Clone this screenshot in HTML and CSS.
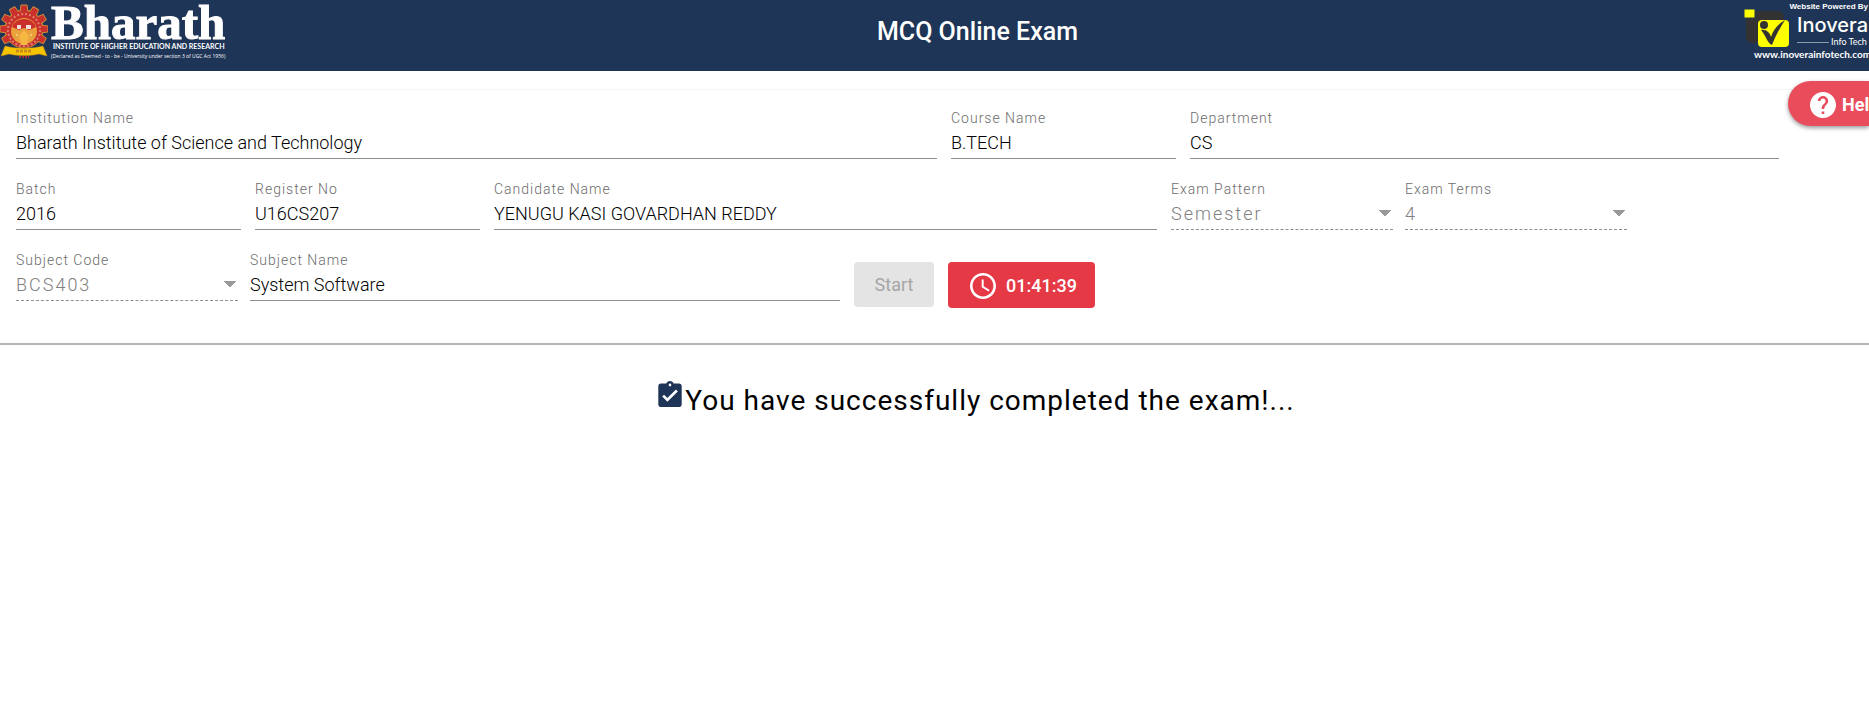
FILE: index.html
```html
<!DOCTYPE html>
<html lang="en">
<head>
<meta charset="utf-8">
<title>MCQ Online Exam</title>
<link rel="stylesheet" href="styles.css">
</head>
<body>
<header class="topbar">
  <div class="brand">
    <svg class="emblem" viewBox="0 0 48 54" aria-hidden="true">
      <g fill="#c9302c" stroke="#c98a3a" stroke-width="1">
        <circle cx="24" cy="25" r="19"/>
        <path d="M20 8l1-7h6l1 7z"/>
        <path d="M20 8l1-7h6l1 7z" transform="rotate(30 24 25)"/>
        <path d="M20 8l1-7h6l1 7z" transform="rotate(60 24 25)"/>
        <path d="M20 8l1-7h6l1 7z" transform="rotate(90 24 25)"/>
        <path d="M20 8l1-7h6l1 7z" transform="rotate(120 24 25)"/>
        <path d="M20 8l1-7h6l1 7z" transform="rotate(240 24 25)"/>
        <path d="M20 8l1-7h6l1 7z" transform="rotate(270 24 25)"/>
        <path d="M20 8l1-7h6l1 7z" transform="rotate(300 24 25)"/>
        <path d="M20 8l1-7h6l1 7z" transform="rotate(330 24 25)"/>
      </g>
      <circle cx="24" cy="25" r="18" fill="#c9302c"/>
      <circle cx="24" cy="26" r="16" fill="none" stroke="#dd7f6a" stroke-width="2" stroke-dasharray="2 2"/>
      <circle cx="24" cy="27" r="13" fill="#e9a23b"/>
      <path d="M12 23a13 13 0 0 1 24 0l-7 3-5-2-5 2z" fill="#c9302c"/>
      <path d="M17 21h4v4h-4zM26 21h5v4h-5z" fill="#f3dfd8"/>
      <path d="M24 26l5 6-2 9h-6l-2-9z" fill="#f5b742"/>
      <circle cx="17" cy="31" r="1" fill="#f7d98a"/><circle cx="31" cy="31" r="1" fill="#f7d98a"/>
      <path d="M1 52l4-10c11 3 27 3 38 0l4 10-8-2c-9 2-21 2-30 0z" fill="#f4c400" stroke="#c98a1a" stroke-width=".5"/>
      <path d="M16 47h16" stroke="#c98a1a" stroke-width="3" stroke-dasharray="3 1"/>
      <path d="M19 53h10" stroke="#a02a35" stroke-width="2" stroke-dasharray="2 1"/>
    </svg>
    <div class="brand-text">
      <span class="brand-name">Bharath</span>
      <span class="brand-line">INSTITUTE OF HIGHER EDUCATION AND RESEARCH</span>
      <span class="brand-note">(Declared as Deemed - to - be - University under section 3 of UGC Act 1956)</span>
    </div>
  </div>
  <h1 class="title">MCQ Online Exam</h1>
  <div class="vendor">
    <span class="vendor-top">Website Powered By</span>
    <div class="vendor-mid">
      <svg class="vendor-mark" viewBox="0 0 46 38" aria-hidden="true">
        <rect x="2" y="2" width="38" height="32" rx="6" fill="#333"/>
        <rect x="0" y="0" width="11" height="9" fill="#ff0" stroke="#1e3557" stroke-width="1"/>
        <rect x="14" y="11" width="31" height="27" rx="4" fill="#ff0"/>
        <circle cx="20" cy="16" r="4" fill="#333"/>
        <path d="M17 21c5-1 9 3 10 7 2-7 7-13 14-17-5 8-9 15-13 25-4-1-6-9-11-15z" fill="#333"/>
      </svg>
      <div class="vendor-words">
        <span class="vendor-name">Inovera</span>
        <span class="vendor-sub">Info Tech</span>
      </div>
    </div>
    <span class="vendor-url">www.inoverainfotech.com</span>
  </div>
</header>

<button class="help" type="button">
  <svg viewBox="2 2 20 20" aria-hidden="true"><path fill="#fff" d="M12 2C6.48 2 2 6.48 2 12s4.48 10 10 10 10-4.48 10-10S17.52 2 12 2zm1 17h-2v-2h2v2zm2.070-7.750l-.9.920C13.450 12.900 13 13.500 13 15h-2v-.5c0-1.100.45-2.100 1.170-2.830l1.240-1.260c.370-.360.590-.860.590-1.410 0-1.100-.9-2-2-2s-2 .9-2 2H8c0-2.210 1.790-4 4-4s4 1.790 4 4c0 .880-.360 1.680-.930 2.250z"/></svg>
  <span>Help</span>
</button>

<main>
  <form class="details">
    <div class="row row-one">
      <div class="field"><label for="inst">Institution Name</label><input id="inst" readonly value="Bharath Institute of Science and Technology"></div>
      <div class="field"><label for="course">Course Name</label><input id="course" readonly value="B.TECH"></div>
      <div class="field"><label for="dept">Department</label><input id="dept" readonly value="CS"></div>
    </div>
    <div class="row row-two">
      <div class="field"><label for="batch">Batch</label><input id="batch" readonly value="2016"></div>
      <div class="field"><label for="reg">Register No</label><input id="reg" readonly value="U16CS207"></div>
      <div class="field"><label for="cand">Candidate Name</label><input id="cand" readonly value="YENUGU KASI GOVARDHAN REDDY"></div>
      <div class="field pick"><label for="pattern">Exam Pattern</label><select id="pattern" disabled><option>Semester</option></select></div>
      <div class="field pick"><label for="terms">Exam Terms</label><select id="terms" disabled><option>4</option></select></div>
    </div>
    <div class="row row-three">
      <div class="field pick"><label for="code">Subject Code</label><select id="code" disabled><option>BCS403</option></select></div>
      <div class="field"><label for="subj">Subject Name</label><input id="subj" readonly value="System Software"></div>
      <div class="actions">
        <button class="start" type="button" disabled>Start</button>
        <button class="timer" type="button">
          <svg viewBox="2 2 20 20" aria-hidden="true"><path fill="#fff" d="M11.990 2C6.470 2 2 6.480 2 12s4.470 10 9.990 10C17.520 22 22 17.520 22 12S17.520 2 11.990 2zM12 20c-4.420 0-8-3.580-8-8s3.580-8 8-8 8 3.580 8 8-3.580 8-8 8zm.5-13H11v6l5.250 3.150.750-1.230-4.500-2.670z"/></svg>
          <span>01:41:39</span>
        </button>
      </div>
    </div>
  </form>
  <p class="message">
    <svg viewBox="3 1 18 20" aria-hidden="true"><path fill="#1e3557" d="M19 3h-4.180C14.400 1.840 13.300 1 12 1c-1.300 0-2.400.840-2.820 2H5c-1.100 0-2 .9-2 2v14c0 1.100.9 2 2 2h14c1.100 0 2-.9 2-2V5c0-1.100-.9-2-2-2zm-7 0c.55 0 1 .45 1 1s-.45 1-1 1-1-.45-1-1 .45-1 1-1zm-2 14l-4-4 1.410-1.410L10 14.170l6.590-6.590L18 9l-8 8z"/></svg>
    <span>You have successfully completed the exam!...</span>
  </p>
</main>
</body>
</html>
```
FILE: styles.css
```css
* { box-sizing: border-box; }
body {
  margin: 0;
  font-family: Roboto, sans-serif;
  background: #fff;
  color: #000;
  overflow-x: hidden;
}
.topbar {
  display: grid;
  grid-template-columns: 1fr auto 1fr;
  height: 71px;
  background: #1e3557;
  color: #fff;
}
.brand { display: flex; gap: 3px; padding-top: 4px; }
.emblem { width: 48px; height: 54px; }
.brand-text { display: flex; flex-direction: column; white-space: nowrap; }
.brand-name { font: bold 49px/38px "Liberation Serif", serif; -webkit-text-stroke: 1px #fff; }
.brand-line { font: bold 7px/8px Lato, sans-serif; padding-left: 2px; }
.brand-note { font: 5px/12px "Open Sans", sans-serif; }
.title {
  margin: 0;
  padding-left: 86px;
  font-size: 25px;
  font-weight: 500;
  line-height: 63px;
}
.vendor {
  justify-self: end;
  width: 125px;
  display: flex;
  flex-direction: column;
  white-space: nowrap;
}
.vendor-top { align-self: flex-end; font: bold 8px/10px "Liberation Sans", sans-serif; padding: 2px 1px 0 0; }
.vendor-mid { display: flex; margin-top: -3px; }
.vendor-mark { flex: none; width: 46px; height: 38px; }
.vendor-words { flex: none; display: flex; flex-direction: column; padding: 3px 0 0 7px; }
.vendor-name { font: 500 20px/26px Inter, sans-serif; }
.vendor-sub {
  display: flex;
  align-items: center;
  gap: 2px;
  font: 9px/8px Lato, sans-serif;
}
.vendor-sub::before { content: ""; width: 32px; height: 1px; background: #8d9aab; }
.vendor-url { font: bold 10px/14px Lato, sans-serif; padding-left: 10px; }

.help {
  position: absolute;
  top: 81px;
  right: 0;
  width: 81px;
  height: 45px;
  display: flex;
  align-items: center;
  gap: 6px;
  padding: 2px 0 0 22px;
  border: 0;
  border-radius: 23px 0 0 23px;
  background: #e94d5b;
  color: #fff;
  font: bold 18px/24px Roboto, sans-serif;
  box-shadow: 0 2px 4px rgba(0, 0, 0, .4);
  overflow: hidden;
}
.help svg { flex: none; width: 26px; height: 26px; }

.details {
  margin-top: 18px;
  padding: 20px 0 20px 16px;
  border-top: 1px solid #f5f5f5;
  border-bottom: 2px solid #b5b5b8;
}
.row { display: grid; height: 71px; align-items: start; }
.row-one { grid-template-columns: 935fr 239fr 603fr 76fr; }
.row-two { grid-template-columns: 239fr 239fr 677fr 234fr 234fr 230fr; }
.row-three { grid-template-columns: 234fr 604fr 1015fr; }
.field { display: flex; flex-direction: column; min-width: 0; padding-right: 14px; }
.pick { padding-right: 12px; }
.field label {
  font-size: 14px;
  line-height: 16px;
  letter-spacing: 1px;
  color: #6c6c6c;
  font-weight: 300;
}
.field input, .field select {
  width: 100%;
  height: 33px;
  margin: 0;
  padding: 1px 0 0;
  border: 0;
  border-bottom: 1px solid #8f8f8f;
  border-radius: 0;
  background: transparent;
  color: #000;
  font: 300 18px/24px Roboto, sans-serif;
  outline: 0;
}
.field select {
  appearance: none;
  opacity: 1;
  color: #808080;
  letter-spacing: 2px;
  border-bottom: 1px dashed #8f8f8f;
  background-image: linear-gradient(to bottom right, #999 50%, transparent 51%), linear-gradient(to bottom left, #999 50%, transparent 51%);
  background-size: 6px 6px;
  background-position: right 2px top 13px, right 8px top 13px;
  background-repeat: no-repeat;
}
.actions { display: flex; align-items: flex-start; gap: 14px; padding-top: 10px; }
.start, .timer {
  height: 45px;
  border: 0;
  border-radius: 4px;
  font: 500 18px/24px Roboto, sans-serif;
}
.start { width: 80px; background: #e4e4e4; color: #a6a6a6; font-weight: 400; }
.timer {
  height: 46px;
  width: 147px;
  display: flex;
  align-items: center;
  gap: 10px;
  padding: 2px 0 0 22px;
  background: #e63946;
  color: #fff;
}
.timer svg { width: 26px; height: 26px; }
.message {
  display: flex;
  justify-content: center;
  gap: 3px;
  margin: 36px 0 0;
  padding-left: 84px;
  color: #000;
  font-size: 28px;
  line-height: 40px;
  letter-spacing: 1px;
}
.message svg { width: 24px; height: 26px; }
```
